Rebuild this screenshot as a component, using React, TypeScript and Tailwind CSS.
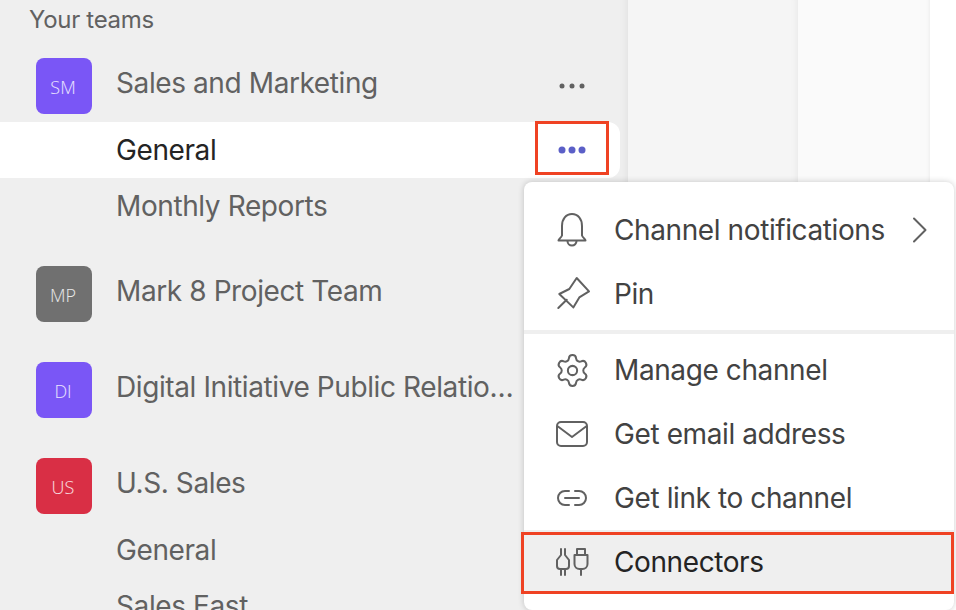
import { ReactNode } from "react";
import { Settings } from "lucide-react";

function Dots({ active }: { active?: boolean }) {
  return (
    <svg width="32" height="12" viewBox="0 0 32 12" fill={active ? "#5b5fc7" : "#616161"}>
      <circle cx="6" cy="6" r={active ? 3.5 : 2.5} />
      <circle cx="16" cy="6" r={active ? 3.5 : 2.5} />
      <circle cx="26" cy="6" r={active ? 3.5 : 2.5} />
    </svg>
  );
}

function Team({ initials, color, name, dots }: { initials: string; color: string; name: string; dots?: boolean }) {
  return (
    <div className="flex h-14 items-center pl-9 pr-10">
      <div className={`flex h-14 w-14 shrink-0 items-center justify-center rounded-lg pr-[2px] pt-[1px] text-[18px] font-light text-white/85 [font-family:'Open_Sans',sans-serif] tracking-normal ${color}`}>
        {initials}
      </div>
      <div className="ml-6 w-[403px] -translate-y-[3px] truncate text-[#616161]">{name}</div>
      {dots && (
        <div className="ml-auto">
          <Dots />
        </div>
      )}
    </div>
  );
}

function Channel({ name }: { name: string }) {
  return <div className="flex h-14 items-center pl-[116px] text-[#616161]">{name}</div>;
}

const stroke = {
  width: 32,
  height: 32,
  viewBox: "0 0 32 32",
  fill: "none",
  stroke: "#616161",
  strokeWidth: 2,
  strokeLinecap: "round" as const,
  strokeLinejoin: "round" as const,
  className: "overflow-visible",
};

const BellIcon = () => (
  <svg {...stroke}>
    <path d="M2.500 26.500c0-1.500 2.500-2.500 3.500-5V12C6 5 10 0 16 0s10 5 10 12v9.500c1 2.500 3.500 3.500 3.500 5z" />
    <path d="M11.500 27a4.500 4.500 0 0 0 9 0" />
  </svg>
);

const PinIcon = () => (
  <svg {...stroke}>
    <path d="M20.700 0l12.300 13.400-9.700 6-6 10-14-13.400 10-5z" />
    <path d="M2.300 30l8.400-8.300" />
  </svg>
);

const MailIcon = () => (
  <svg {...stroke}>
    <rect x="1" y="4" width="30" height="24" rx="4" />
    <path d="M2 8.500l14 10.500 14-10.500" />
  </svg>
);

const LinkIcon = () => (
  <svg {...stroke}>
    <path d="M13 9H9a7 7 0 0 0 0 14h4" />
    <path d="M19 9h4a7 7 0 0 1 0 14h-4" />
    <path d="M9 16h14" />
  </svg>
);

const ConnectorIcon = () => (
  <svg {...stroke}>
    <path d="M5 3v6l-4 5v6a3 3 0 0 0 3 3h6a3 3 0 0 0 3-3v-6L9 9V3" />
    <path d="M5 23v6M9 23v6" />
    <path d="M21 3h8v6h-8z" />
    <path d="M18.500 9h13v9a5 5 0 0 1-5 5h-3a5 5 0 0 1-5-5z" />
    <path d="M25 23v6" />
  </svg>
);

const ChevronIcon = () => (
  <svg {...stroke}>
    <path d="M16 4.500L27.500 16 16 27.500" />
  </svg>
);

function MenuItem({ icon, label, hover, trailing }: { icon: ReactNode; label: string; hover?: boolean; trailing?: ReactNode }) {
  return (
    <div className={`flex h-16 items-center pl-8 pr-6 ${hover ? "bg-[#efefef] text-[#242424]" : "text-[#424242]"}`}>
      <span className="flex h-8 w-8 shrink-0 items-center justify-center">{icon}</span>
      <span className="ml-[26px] flex-1">{label}</span>
      {trailing}
    </div>
  );
}

export default function App() {
  return (
    <div className="relative flex h-[610px] w-[956px] overflow-hidden text-[28px] leading-9 tracking-[-0.4px] [font-family:Inter,sans-serif]">
      {/* Team list */}
      <div className="w-[628px] shrink-0 bg-[#efefef] shadow-[inset_-10px_0_10px_-10px_rgba(0,0,0,0.08)]">
        <div className="pl-[29px] pt-1 text-[24px] leading-8 tracking-[-0.3px] text-[#616161]">Your teams</div>
        <div className="mt-[22px]">
          <Team initials="SM" color="bg-[#7a56f6]" name="Sales and Marketing" dots />
          <div className="mt-2 flex h-14 w-[620px] items-center justify-between rounded-r-xl bg-white pl-[116px] pr-[32px] text-[#242424]">
            <span>General</span>
            <Dots active />
          </div>
          <Channel name="Monthly Reports" />
        </div>
        <div className="mt-8">
          <Team initials="MP" color="bg-[#707070]" name="Mark 8 Project Team" />
        </div>
        <div className="mt-10">
          <Team initials="DI" color="bg-[#7a56f6]" name="Digital Initiative Public Relations" />
        </div>
        <div className="mt-10">
          <Team initials="US" color="bg-[#d92f45]" name="U.S. Sales" />
          <div className="mt-2">
            <Channel name="General" />
            <Channel name="Sales East" />
          </div>
        </div>
      </div>
      <div className="w-[170px] shrink-0 bg-[#f5f5f5] shadow-[inset_-8px_0_8px_-8px_rgba(0,0,0,0.07)]" />
      <div className="w-[132px] shrink-0 bg-[#fafafa] shadow-[inset_-4px_0_4px_-4px_rgba(0,0,0,0.08)]" />
      <div className="flex-1 bg-white" />

      {/* Channel menu */}
      <div className="absolute left-[524px] top-[182px] h-[428px] w-[430px] rounded-lg bg-white py-4 shadow-[0_0_6px_rgba(0,0,0,0.2)]">
        <MenuItem icon={<BellIcon />} label="Channel notifications" trailing={<ChevronIcon />} />
        <MenuItem icon={<PinIcon />} label="Pin" />
        <div className="my-1 h-1 bg-[#efefef]" />
        <MenuItem
          icon={<Settings size={37} strokeWidth={1.3} color="#616161" className="shrink-0" />}
          label="Manage channel"
        />
        <MenuItem icon={<MailIcon />} label="Get email address" />
        <MenuItem icon={<LinkIcon />} label="Get link to channel" />
        <MenuItem icon={<ConnectorIcon />} label="Connectors" hover />
      </div>

      {/* Callouts */}
      <div className="absolute left-[535px] top-[121px] h-[54px] w-[74px] border-[3px] border-[#ef4223]" />
      <div className="absolute left-[521px] top-[532px] h-[62px] w-[433px] border-[3px] border-[#ef4223]" />
    </div>
  );
}
